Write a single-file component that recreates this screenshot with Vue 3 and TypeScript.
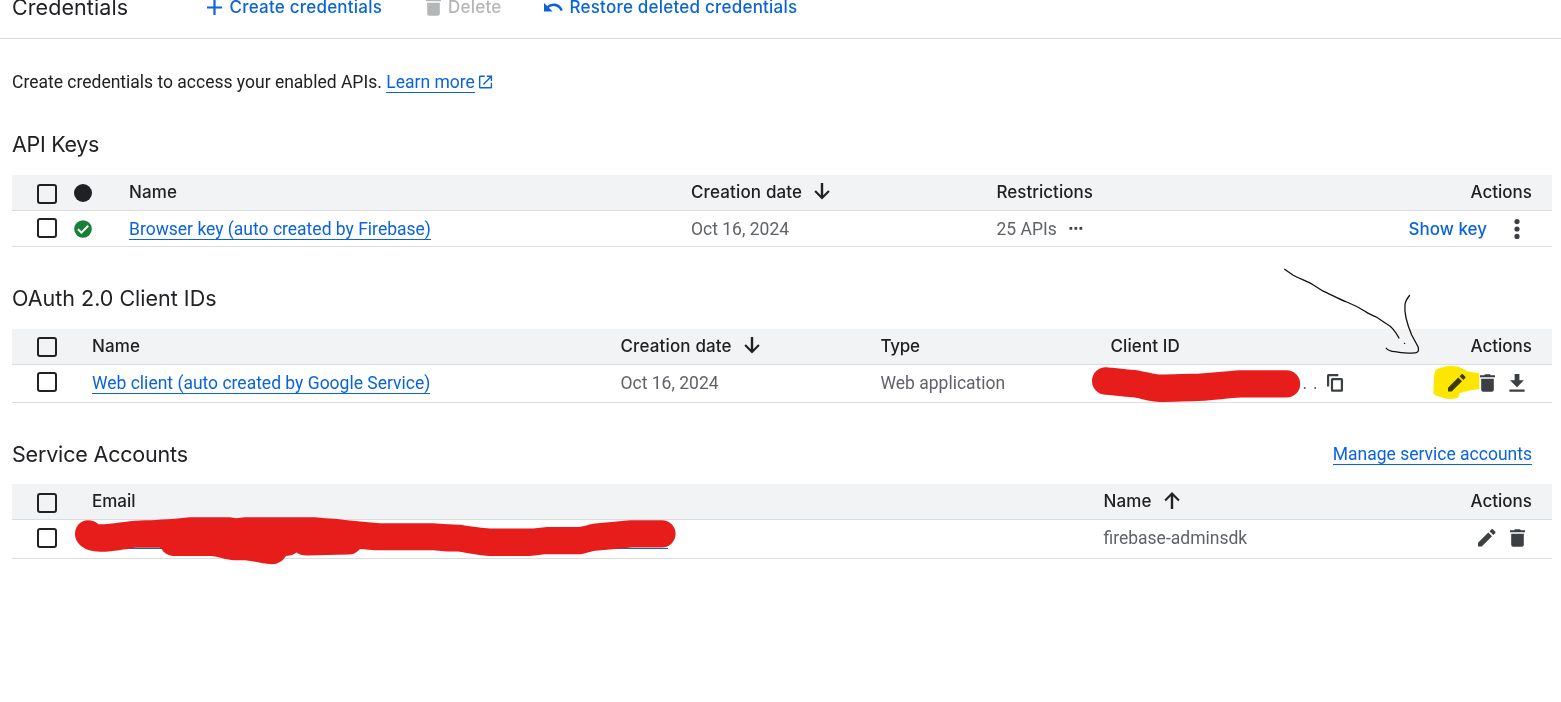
<script setup lang="ts">
import { h, type FunctionalComponent } from 'vue'

interface IconShape {
  w: number
  h: number
  d: string
}

const shapes: Record<string, IconShape> = {
  plus: { w: 15, h: 15, d: 'M6.4 0h2.2v6.4H15v2.2H8.6V15H6.4V8.6H0V6.4h6.4z' },
  trash: {
    w: 15,
    h: 18,
    d: 'M0 1.3h4.1L5 .3h5l.9 1H15v2H0zM1.2 4.7h12.6V15.700a2 2 0 0 1-2 2H3.200a2 2 0 0 1-2-2z',
  },
  undo: {
    w: 19,
    h: 9,
    d: 'M0 0l3.200 3.100C5 1.500 7.300 .6 9.800 .6c4.200 0 7.600 2.700 9 6.600l-2.200.8c-1.100-3-3.700-5.100-6.900-5.100-1.800 0-3.500.7-4.800 1.800l3.700 3.900H0z',
  },
  external: {
    w: 14,
    h: 14,
    d: 'M0 1.400Q0 .5 1.200 .5H5.800V1.900H1.400V12.100H11.700V7.700H13.100V12.400Q13.100 13.500 12 13.500H1.200Q0 13.500 0 12.400ZM7.800 .5H13.100V6H11.700V3L4.900 9.900 3.900 8.900 10.700 1.900H7.800Z',
  },
  down: { w: 16, h: 17, d: 'M6.800 0h2.400v12.300l5-5 1.500 1.500L8 16.500 .4 8.800l1.500-1.500 4.900 5z' },
  up: { w: 16, h: 17, d: 'M6.800 17h2.400V4.200l5 5 1.500-1.500L8 0 .4 7.700l1.500 1.500 4.900-5z' },
  pencil: {
    w: 18,
    h: 18,
    d: 'M0 13.800V17.500H3.700L14 7.200 10.300 3.500ZM17.300 3.900a.9.9 0 0 0 0-1.200L14.800.3a.9.9 0 0 0-1.200 0L11.600 2.200 15.300 5.900Z',
  },
  download: { w: 16, h: 18, d: 'M5.600 0h4.800v6.200h4.500L8 13.200 1 6.200h4.600zM.4 15.500h15.200v2.300H.4z' },
  copy: {
    w: 16,
    h: 18,
    d: 'M0 12.500V1.500Q0 0 1.500 0H11.300V2.200H2.200V12.500ZM5.400 4H14.400Q16 4 16 5.600V16.200Q16 17.800 14.400 17.800H5.400Q3.900 17.800 3.900 16.200V5.600Q3.900 4 5.400 4ZM6.100 6.200V15.600H13.800V6.200Z',
  },
  more: {
    w: 6,
    h: 20,
    d: 'M3 0a2.600 2.600 0 1 1 0 5.200A2.600 2.600 0 0 1 3 0ZM3 7.400a2.600 2.600 0 1 1 0 5.200A2.600 2.600 0 0 1 3 7.400ZM3 14.800a2.600 2.600 0 1 1 0 5.200A2.600 2.600 0 0 1 3 14.800Z',
  },
  dots: { w: 14, h: 3, d: 'M.5 0h2.700v2.700H.5zM5.500 0h2.700v2.700H5.500zM10.500 0h2.700v2.700h-2.700z' },
}

const Icon: FunctionalComponent<{ name: string }> = (props) => {
  const s = shapes[props.name]
  return h(
    'svg',
    { width: s.w, height: s.h, viewBox: `0 0 ${s.w} ${s.h}`, 'aria-hidden': 'true' },
    [h('path', { d: s.d, fill: 'currentColor', 'fill-rule': 'evenodd' })],
  )
}
Icon.props = ['name']
</script>

<template>
  <div class="page">
    <header class="toolbar">
      <div class="toolbar-inner">
        <h1 class="title t-cred">Credentials</h1>
        <button class="tool create"><Icon name="plus" /><span>Create credentials</span></button>
        <button class="tool delete"><Icon name="trash" /><span>Delete</span></button>
        <button class="tool restore"><Icon name="undo" /><span>Restore deleted credentials</span></button>
      </div>
    </header>

    <main class="content">
      <p class="intro">
        <span>Create credentials to access your enabled APIs.</span>
        <a class="link">Learn more</a>
        <Icon name="external" class="ext" />
      </p>

      <section class="keys">
        <h2 class="title t-api">API Keys</h2>
        <div class="row head">
          <div class="check low"><i class="box"></i></div>
          <div class="status"><i class="dot"></i></div>
          <div class="t-name">Name</div>
          <div class="sort"><span class="t-date">Creation date</span><Icon name="down" /></div>
          <div>Restrictions</div>
          <div class="actions">Actions</div>
        </div>
        <div class="row">
          <div class="check"><i class="box"></i></div>
          <div class="status">
            <svg width="18" height="18" viewBox="0 0 18 18">
              <circle cx="9" cy="9" r="8.800" fill="#188038" />
              <path d="M4 9.300l3.400 3.400 6.800-6.900" fill="none" stroke="#fff" stroke-width="2" />
            </svg>
          </div>
          <div><a class="link">Browser key (auto created by Firebase)</a></div>
          <div>Oct 16, 2024</div>
          <div class="apis"><span>25 APIs</span><Icon name="dots" /></div>
          <div class="actions show"><span>Show key</span><Icon name="more" /></div>
        </div>
      </section>

      <section class="oauth">
        <h2 class="title">OAuth 2.0 Client IDs</h2>
        <div class="row head">
          <div class="check"><i class="box"></i></div>
          <div class="t-name">Name</div>
          <div class="sort"><span class="t-date">Creation date</span><Icon name="down" /></div>
          <div class="t-type">Type</div>
          <div class="t-client">Client ID</div>
          <div class="actions">Actions</div>
        </div>
        <div class="row">
          <div class="check"><i class="box"></i></div>
          <div><a class="link">Web client (auto created by Google Service)</a></div>
          <div>Oct 16, 2024</div>
          <div>Web application</div>
          <div class="client"><span class="ellipsis">..</span><Icon name="copy" /></div>
          <div class="actions icons"><Icon name="pencil" /><Icon name="trash" class="mid" /><Icon name="download" /></div>
        </div>
      </section>

      <section class="accounts">
        <div class="section-head">
          <h2 class="title t-svc">Service Accounts</h2>
          <a class="link">Manage service accounts</a>
        </div>
        <div class="row head">
          <div class="check low"><i class="box"></i></div>
          <div>Email</div>
          <div class="sort"><span class="t-name">Name</span><Icon name="up" /></div>
          <div class="actions">Actions</div>
        </div>
        <div class="row">
          <div class="check"><i class="box"></i></div>
          <div><a class="link hidden-mail"></a></div>
          <div>firebase-adminsdk</div>
          <div class="actions icons"><Icon name="pencil" /><Icon name="trash" /></div>
        </div>
      </section>
    </main>

    <!-- Highlighter stroke over the edit action -->
    <svg class="ink marker" width="1561" height="702" viewBox="0 0 1561 702">
      <path
        fill="#ffe600"
        d="M1435.300 370Q1440 367.500 1446.700 366.300Q1453 365.500 1458.300 366.700L1463.300 369L1467.300 371.300L1479.300 373.300V389L1468.300 390.700L1459.300 393.300Q1460 396.500 1456.700 398.300Q1452 399.500 1446.700 398.700L1435 395.300L1433.300 393.300L1434 376.700Z"
      />
    </svg>
    <!-- Redactions and hand-drawn arrow -->
    <svg class="ink" width="1561" height="702" viewBox="0 0 1561 702">
      <path
        d="M1105.700 381C1112 381.300 1124 383 1133 383.500C1142 384.500 1152 388 1160 388.200C1170 388.200 1180 387.800 1193 387.500C1207 387.500 1224 384.800 1240 383.900H1286.500"
        fill="none"
        stroke="#e71d1c"
        stroke-width="27.400"
        stroke-linecap="round"
        stroke-linejoin="round"
      />
      <path
        fill="#e71d1c"
        d="M75 534C75 526 81 520.300 88 520.300C92 520.300 96 521.500 98.500 524.300C112 524.500 126 521 140 520.500C153 520.300 168 519.500 190 517.300H230L236 518.300L245 517.300H315C325 518.500 335 518.500 345 520L368 522.200L380 523.200H433L448 524.300L460 524.700Q472 527 490 528.500H533L547 527H578C585 526.500 589 523.800 598 523.200L630 520.200H662A13.600 13.600 0 0 1 662 547.400H632L598 550.500C590 551 585 554.300 578 554.300H545L530 556H490C480 555.500 467 553 458 551.600H447L433 550.300H375L360 549Q355 554.800 348 554.500L307 555.500Q300 555.500 296.500 552.500Q293 555.500 286 556Q281 564 272 564.300C262 564 254 561 245 560.300H235C226 560 219 556.500 210 556H173Q165 555 161.500 549L160 547.700H135C125 549 114 551.700 101 551.700C84 552 75 543 75 534Z"
      />
      <g fill="none" stroke="#111" stroke-width="1.300" stroke-linecap="round" stroke-linejoin="round">
        <path d="M1284.700 269.300Q1289 272.500 1293.300 275.300C1300 279 1307 281 1313 284.700L1321.700 290.300C1330 294 1339 299 1346.700 302C1353 304.500 1360 308 1365 311.300C1369 314.500 1373 315 1376.700 317.300L1386.700 324Q1393 327 1399 338" />
        <path d="M1409.500 295.500Q1405.500 300.500 1405 304.500C1404 314 1407 324 1411.700 335L1418.300 347.300Q1419.300 352.500 1415 352.900Q1403 353.800 1395 351.700Q1388.500 351 1386.300 348.300" />
        <path d="M1404.500 343.400h.1" />
      </g>
    </svg>
  </div>
</template>

<style>
body {
  background: #fff;
}
</style>

<style scoped>
.page {
  position: relative;
  width: 1561px;
  height: 702px;
  overflow: hidden;
  background: #fff;
  color: #202124;
  font: 400 17.5px/24px Roboto, 'Liberation Sans', sans-serif;
}
.toolbar {
  height: 38px;
  border-bottom: 1px solid #d8d9dc;
}
.toolbar-inner {
  display: flex;
  align-items: center;
  height: 30px;
  padding-left: 12px;
  transform: translateY(-8px);
}
.title {
  margin: 0;
  font: 400 21.5px/30px Inter, 'Open Sans', sans-serif;
  white-space: nowrap;
}
.toolbar .title {
  width: 194.5px;
  letter-spacing: 0.08px;
}
.t-api {
  letter-spacing: -0.3px;
}
.t-svc {
  letter-spacing: -0.18px;
}
.tool {
  display: flex;
  align-items: center;
  gap: 8px;
  padding: 0;
  border: 0;
  background: none;
  color: #0b63dc;
  font: 500 17px/24px Inter, 'Open Sans', sans-serif;
  letter-spacing: 0.22px;
  white-space: nowrap;
}
.create {
  width: 219px;
}
.delete {
  width: 118.5px;
  gap: 7.5px;
  color: #b5b6b8;
}
.restore {
  gap: 6.5px;
}
.content {
  padding: 0 9px 0 12px;
}
.intro {
  display: flex;
  align-items: center;
  height: 24px;
  margin: 31px 0 0;
}
.intro .link {
  margin: 0 0 2px 4.5px;
}
.ext {
  margin-left: 4px;
  color: #0b63dc;
}
.link {
  display: inline-block;
  height: 22px;
  line-height: 24px;
  border-bottom: 1px solid #0b63dc;
  color: #0b63dc;
  white-space: nowrap;
}
.keys {
  margin-top: 35px;
}
.keys > .title,
.oauth > .title {
  margin-bottom: 16px;
}
.oauth,
.accounts {
  margin-top: 36px;
}
.section-head {
  display: flex;
  align-items: center;
  justify-content: space-between;
  height: 30px;
  margin-bottom: 15px;
  padding-right: 20px;
}
.section-head .link {
  margin-bottom: 2px;
}
.row {
  display: grid;
  box-sizing: border-box;
  align-items: center;
  height: 36px;
  border-bottom: 1px solid #dadce0;
  color: #5f6368;
  white-space: nowrap;
}
.oauth .row:last-child {
  height: 38px;
  padding-bottom: 2px;
}
.accounts .row:last-child {
  height: 39px;
  padding-bottom: 2px;
}
.row.head {
  padding-bottom: 2px;
  background: #f1f3f4;
  color: #202124;
  font: 500 17px/24px Inter, 'Open Sans', sans-serif;
}
.keys .row {
  grid-template-columns: 62px 55px 562px 305.5px 1fr auto;
}
.oauth .row {
  grid-template-columns: 80px 528.5px 260px 230px 1fr auto;
}
.accounts .row {
  grid-template-columns: 80px 1011.5px 1fr auto;
}
.check {
  align-self: start;
  padding: 7px 0 0 25px;
}
.oauth .head .check,
.accounts .check {
  padding-top: 8px;
}
.keys .check.low,
.accounts .check.low {
  padding-top: 9px;
}
.box {
  display: block;
  box-sizing: border-box;
  width: 20px;
  height: 20px;
  border: 2px solid #202124;
  border-radius: 3px;
}
.status svg,
.dot {
  display: block;
}
.dot {
  width: 18px;
  height: 18px;
  margin-top: 2px;
  border-radius: 50%;
  background: #202124;
}
.t-date {
  letter-spacing: 0.14px;
}
.t-name {
  letter-spacing: 0.1px;
}
.t-type {
  letter-spacing: -0.3px;
}
.t-client {
  letter-spacing: 0.1px;
}
.sort {
  display: flex;
  align-items: center;
  gap: 12px;
}
.apis {
  display: flex;
  align-items: center;
  gap: 12px;
}
.apis svg,
.actions svg,
.client svg {
  color: #3c4043;
}
.actions {
  display: flex;
  align-items: center;
  padding-right: 20px;
}
.show {
  gap: 27px;
  padding-right: 32px;
  color: #0b63dc;
  font: 500 17px/24px Inter, 'Open Sans', sans-serif;
}
.icons {
  gap: 14px;
  padding-right: 27px;
}
.mid {
  margin: 0 0.5px 0 -0.5px;
}
.client {
  display: flex;
  align-items: center;
  padding-left: 192px;
}
.ellipsis {
  width: 24px;
  letter-spacing: 6px;
}
.hidden-mail {
  display: block;
  width: 576px;
  margin-bottom: 1px;
}
.ink {
  position: absolute;
  top: 0;
  left: 0;
  pointer-events: none;
}
.marker {
  mix-blend-mode: multiply;
}
</style>
